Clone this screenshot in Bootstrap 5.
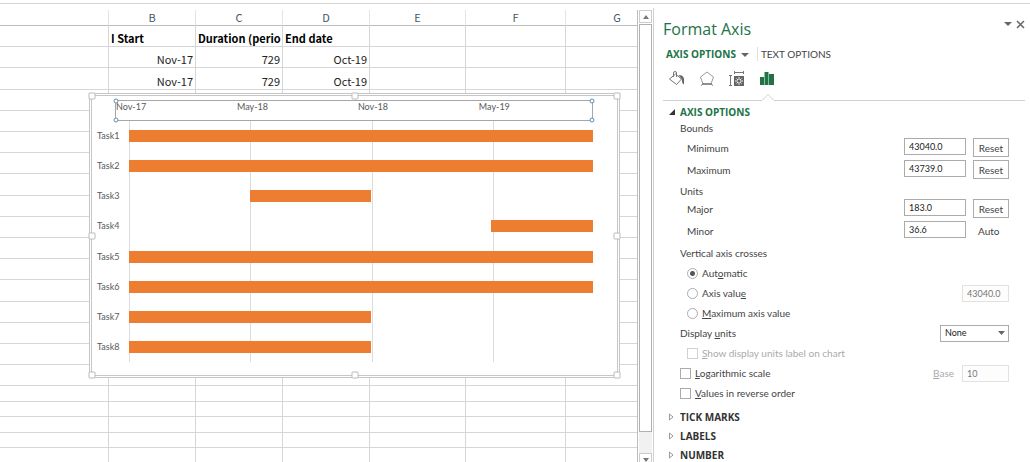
<!DOCTYPE html>
<html lang="en">
<head>
<meta charset="utf-8">
<meta name="viewport" content="width=device-width, initial-scale=1">
<title>Format Axis</title>
<link href="https://cdn.jsdelivr.net/npm/bootstrap@5.3.0/dist/css/bootstrap.min.css" rel="stylesheet">
<style>
  :root { --green: #217346; --ink: #444; --line: #d6d6d6; }
  body { font-family: "Open Sans", "Noto Sans", sans-serif; font-size: 10px; line-height: 14px; color: var(--ink); background: #fff; }
  .topline { height: 4px; border-bottom: 1px solid #d4d4d4; }

  /* worksheet */
  .sheet { min-width: 0; padding-top: 6px; }
  .grid { table-layout: fixed; width: 900px; border-collapse: separate; border-spacing: 0; font-family: "Noto Sans CJK SC", sans-serif; font-size: 11px; line-height: 14px; color: #222; }
  .grid th, .grid td { padding: 0 2px 1px; border-right: 1px solid var(--line); border-bottom: 1px solid var(--line); white-space: nowrap; overflow: hidden; vertical-align: bottom; }
  .grid thead th { height: 16px; font-weight: 400; color: #44546a; text-align: center; border-right-color: #e4e4e4; border-bottom-color: #bdbdbd; }
  .grid tbody tr { height: 21px; }
  .grid tbody tr:nth-child(5n+3) { height: 22px; }
  .grid tbody tr.short { height: 15px; line-height: 12px; }
  .grid tbody tr.short:nth-child(even) { height: 16px; }
  .grid tbody td { text-align: right; }
  .grid tbody th { color: #000; text-align: left; font-weight: 700; }
  .cells { border-right: 1px solid #bdbdbd; }

  .vbar { width: 15px; padding: 2px 1px 0; margin-bottom: -4px; }
  .vbar button { height: 13px; border: 1px solid #ccc; background: #fff; }
  .vbar .track { background: #f1f1f1; margin-top: 1px; }
  .vbar .thumb { height: 95%; border: 1px solid #b0b0b0; background: #fff; }

  /* floating chart */
  .chart { left: 91px; top: 91px; width: 527px; height: 281px; background: #fff; border: 1px solid #c6c6c6; outline: 1px solid #c6c6c6; outline-offset: 1px; box-shadow: 0 0 0 1px #fff; padding: 4px 24px 13px 5px; font-family: Lato, sans-serif; font-size: 9px; line-height: 12px; color: #595959; }
  .axis { height: 21px; margin-left: 18px; border: 1px solid #a6a6a6; }
  .axis span { flex: 0 0 auto; }
  .plot { margin-left: 32px; }
  .tick { width: 1px; top: 0; bottom: 0; background: #dcdcdc; }
  .task { margin-left: -32px; }
  .task .name { width: 32px; }
  .bar { height: 12px; background: #ed7d31; }
  .knob { width: 7px; height: 7px; background: #fff; border: 1px solid #bbb; border-radius: 1px; }
  .pin { width: 5px; height: 5px; background: #fff; border: 1px solid #5b8fb5; border-radius: 50%; }

  /* task pane */
  .pane { flex: 0 0 377px; border-left: 1px solid #d0d0d0; padding: 8px 5px 0 9px; }
  .pane h1 { font-size: 16px; line-height: 26px; font-weight: 400; color: var(--green); }
  .pane button, .pane input, .pane select { font-family: inherit; }
  .plain { border: 0; background: none; padding: 0; color: inherit; }
  .tabs { height: 24px; padding-left: 3px; }
  .tabs .on, .section.on .plain { color: var(--green); font-weight: 700; }
  .pane .second { border-left: 1px solid #e0e0e0; padding-left: 3px; margin-left: 8px; font-family: Lato, sans-serif; }
  .icons { height: 26px; gap: 12px; padding-left: 5px; }
  .icons button { width: 18px; height: 18px; }
  .icons svg { display: block; }
  .rule { height: 10px; }
  .rule i { height: 1px; background: #d0d0d0; margin-top: 8px; }
  .section { height: 19px; padding-left: 5px; }
  .section .plain { font-size: 10px; line-height: 14px; font-weight: 700; color: #333; }
  .section svg { width: 8px; height: 8px; margin-right: 4px; }
  .body { padding: 0 16px 0 17px; font-family: Lato, sans-serif; }
  .line { height: 20px; }
  .tight { height: 17px; }
  .sub { padding-left: 7px; }
  .value { height: 22px; }
  .value label { line-height: 20px; }
  .field { width: 62px; height: 17px; padding: 0 4px; border: 1px solid #ababab; border-radius: 0; font-size: 9px; line-height: 12px; color: #222; background: #fff; }
  .field.dim { width: 47px; border-color: #e1e1e1; color: #777; background: #fdfdfd; }
  .reset { width: 36px; height: 19px; margin-left: 7px; }
  .reset.btn { padding: 0; border: 1px solid #ababab; border-radius: 0; font-size: 10px; line-height: 14px; color: var(--ink); background: #fff; }
  output.reset { padding-left: 5px; line-height: 20px; }
  .pane .form-check-input { width: 11px; height: 11px; margin: 0 4px 0 0; border: 1px solid #ababab; background: #fff; flex: none; }
  .pane .form-check-input[type=checkbox] { border-radius: 0; }
  .pane .form-check-input[type=radio]:checked { background: radial-gradient(circle, #555 0 2px, #fff 3px); }
  .pane .form-check-input:disabled { border-color: #d0d0d0; opacity: 1; }
  .off { color: #aaa; }
  .units { width: 69px; height: 17px; padding: 0 4px; border: 1px solid #ababab; border-radius: 0; font-size: 9px; line-height: 14px; color: #222; appearance: none; background: #fff; }
  .drop svg { right: 4px; top: 6px; pointer-events: none; }
</style>
</head>
<body>
<div class="vh-100 d-flex flex-column overflow-hidden">
  <div class="topline flex-shrink-0"></div>
  <div class="d-flex flex-grow-1 overflow-hidden">

    <main class="sheet flex-grow-1 position-relative overflow-hidden">
      <div class="cells h-100 overflow-hidden">
        <table class="grid">
          <colgroup><col style="width:109px"><col style="width:87px"><col style="width:87px"><col style="width:87px"><col style="width:96px"><col style="width:100px"><col style="width:103px"><col></colgroup>
          <thead><tr><th></th><th>B</th><th>C</th><th>D</th><th>E</th><th>F</th><th>G</th><th></th></tr></thead>
          <tbody id="rows">
            <tr><td></td><th>I Start</th><th>Duration (perio</th><th>End date</th><td></td><td></td><td></td><td></td></tr>
            <tr><td></td><td>Nov-17</td><td>729</td><td>Oct-19</td><td></td><td></td><td></td><td></td></tr>
            <tr><td></td><td>Nov-17</td><td>729</td><td>Oct-19</td><td></td><td></td><td></td><td></td></tr>
          </tbody>
        </table>
      </div>

      <section class="chart position-absolute d-flex flex-column" aria-label="Gantt chart">
        <div class="axis d-flex position-relative flex-shrink-0" id="axis">
          <b class="pin position-absolute top-0 start-0 translate-middle"></b>
          <b class="pin position-absolute top-100 start-0 translate-middle"></b>
          <b class="pin position-absolute top-0 start-100 translate-middle"></b>
          <b class="pin position-absolute top-100 start-100 translate-middle"></b>
        </div>
        <div class="plot position-relative flex-grow-1 d-flex flex-column" id="plot"></div>
        <b class="knob position-absolute top-0 start-0 translate-middle"></b>
        <b class="knob position-absolute top-0 start-50 translate-middle"></b>
        <b class="knob position-absolute top-0 start-100 translate-middle"></b>
        <b class="knob position-absolute top-50 start-0 translate-middle"></b>
        <b class="knob position-absolute top-50 start-100 translate-middle"></b>
        <b class="knob position-absolute top-100 start-0 translate-middle"></b>
        <b class="knob position-absolute top-100 start-50 translate-middle"></b>
        <b class="knob position-absolute top-100 start-100 translate-middle"></b>
      </section>
    </main>

    <div class="vbar d-flex flex-column flex-shrink-0 mt-1">
      <button class="p-0 d-flex align-items-center justify-content-center flex-shrink-0" aria-label="Scroll up"><svg width="6" height="4"><path d="M0 4 3 0l3 4z" fill="#777"/></svg></button>
      <div class="track flex-grow-1"><div class="thumb"></div></div>
      <button class="p-0 d-flex align-items-center justify-content-center flex-shrink-0" aria-label="Scroll down"><svg width="6" height="4"><path d="M0 0h6L3 4z" fill="#777"/></svg></button>
    </div>

    <aside class="pane mt-1">
      <header class="d-flex align-items-start">
        <h1 class="m-0 me-auto">Format Axis</h1>
        <button class="plain me-1 mt-1 d-flex" aria-label="Pane options"><svg width="8" height="9"><path d="M0 2h8L4 6z" fill="#666"/></svg></button>
        <button class="plain mt-1 d-flex" aria-label="Close"><svg width="9" height="9"><path d="m1 1 7 7m0-7L1 8" stroke="#666" stroke-width="1.5"/></svg></button>
      </header>
      <nav class="tabs d-flex align-items-center">
        <button class="plain on">AXIS OPTIONS<svg class="ms-1" width="9" height="6"><path d="M1 1h8L5 5z" fill="#666"/></svg></button>
        <button class="plain second">TEXT OPTIONS</button>
      </nav>
      <div class="icons d-flex align-items-center">
        <button class="plain" aria-label="Fill and line"><svg width="18" height="18" fill="none" stroke="#777"><path d="m7.500 4 6 5-5 5.500L1.500 9l6-5zM5.500 7V3q0-1.500 1.500-1.500T8.500 3v4"/><path d="M10.500 5q5 0 5.500 4v5.500q-2.500-1.500-2-5L10.500 5z" fill="#666" stroke="none"/></svg></button>
        <button class="plain" aria-label="Effects"><svg width="18" height="18" fill="none" stroke="#777"><path d="m9 2 6.500 5-2.500 7H5L2.500 7 9 2z" stroke="#999"/><path d="M5 14h8M5 13.500l-1.500 2M13 13.500l1.500 2" stroke="#555"/></svg></button>
        <button class="plain" aria-label="Size and properties"><svg width="18" height="18"><path d="M6 2.500h10M6.500 1v3M15.500 1v3M2.500 6v10M1 5.500h3M1 15.500h3" stroke="#777"/><path d="M6 6h10v10H6z" fill="#666"/><path d="M11 7v8M7 11h8M8.500 8.500l5 5M13.500 8.500l-5 5" stroke="#eee"/><path d="M10 10h2v2h-2z" fill="#666"/></svg></button>
        <button class="plain" aria-label="Axis options"><svg width="18" height="18" fill="#217346"><path d="M2 7h4v8H2zM6.500 2h4v13h-4zM11 4h5v11h-5z"/></svg></button>
      </div>
      <div class="rule d-flex">
        <i style="width:99px"></i><svg width="12" height="10" fill="none" stroke="#d0d0d0"><path d="M0 8.500 6 2.500l6 6"/></svg><i class="flex-grow-1"></i>
      </div>

      <div class="section on d-flex align-items-center"><button class="plain d-flex align-items-center" aria-expanded="true"><svg><path d="M7 1v6H1z" fill="#333"/></svg>AXIS OPTIONS</button></div>
      <form class="body" onsubmit="return false">
        <div class="tight">Bounds</div>
        <div class="value sub d-flex align-items-start"><label class="me-auto" for="min">Minimum</label><input class="field" id="min" value="43040.0"><button class="reset btn" type="button">Reset</button></div>
        <div class="value sub d-flex align-items-start"><label class="me-auto" for="max">Maximum</label><input class="field" id="max" value="43739.0"><button class="reset btn" type="button">Reset</button></div>
        <div class="tight d-flex align-items-center">Units</div>
        <div class="value sub d-flex align-items-start"><label class="me-auto" for="major">Major</label><input class="field" id="major" value="183.0"><button class="reset btn" type="button">Reset</button></div>
        <div class="value sub d-flex align-items-start"><label class="me-auto" for="minor">Minor</label><input class="field" id="minor" value="36.6"><output class="reset">Auto</output></div>
        <div class="line d-flex align-items-center">Vertical axis crosses</div>
        <div class="line sub d-flex align-items-center"><input class="form-check-input" type="radio" name="cross" id="c1" checked><label for="c1">Aut<u>o</u>matic</label></div>
        <div class="line sub d-flex align-items-center"><input class="form-check-input" type="radio" name="cross" id="c2"><label class="me-auto" for="c2">Axis valu<u>e</u></label><input class="field dim" aria-label="Axis value" value="43040.0" disabled></div>
        <div class="line sub d-flex align-items-center"><input class="form-check-input" type="radio" name="cross" id="c3"><label for="c3"><u>M</u>aximum axis value</label></div>
        <div class="line d-flex align-items-center"><label class="me-auto" for="units">Display <u>u</u>nits</label>
          <span class="drop position-relative d-flex"><select class="units" id="units"><option>None</option><option>Hundreds</option><option>Thousands</option></select><svg class="position-absolute" width="7" height="5"><path d="M0 0h7L3.500 4z" fill="#666"/></svg></span></div>
        <div class="line sub d-flex align-items-center off"><input class="form-check-input" type="checkbox" id="show" disabled><label for="show"><u>S</u>how display units label on chart</label></div>
        <div class="line d-flex align-items-center"><input class="form-check-input" type="checkbox" id="log"><label class="me-auto" for="log"><u>L</u>ogarithmic scale</label><label class="off me-2" for="base"><u>B</u>ase</label><input class="field dim" id="base" value="10" disabled></div>
        <div class="line d-flex align-items-center"><input class="form-check-input" type="checkbox" id="rev"><label for="rev"><u>V</u>alues in reverse order</label></div>
      </form>
      <div class="section d-flex align-items-center mt-1"><button class="plain d-flex align-items-center"><svg><path d="M1.500 1v6L5 4z" fill="none" stroke="#999"/></svg>TICK MARKS</button></div>
      <div class="section d-flex align-items-center"><button class="plain d-flex align-items-center"><svg><path d="M1.500 1v6L5 4z" fill="none" stroke="#999"/></svg>LABELS</button></div>
      <div class="section d-flex align-items-center"><button class="plain d-flex align-items-center"><svg><path d="M1.500 1v6L5 4z" fill="none" stroke="#999"/></svg>NUMBER</button></div>
    </aside>
  </div>
</div>
<script src="https://cdn.jsdelivr.net/npm/bootstrap@5.3.0/dist/js/bootstrap.bundle.min.js"></script>
<script>
  // empty worksheet rows: 14 of full height, then the shorter ones
  const blank = '<td></td>'.repeat(8);
  document.getElementById('rows').insertAdjacentHTML('beforeend',
    `<tr>${blank}</tr>`.repeat(14) + `<tr class="short">${blank}</tr>`.repeat(20));

  // the time axis: serial dates, one tick for each major unit
  const min = 43040, max = 43739, major = 183;
  const pct = days => (days / (max - min) * 100).toFixed(2) + '%';
  const axis = document.getElementById('axis'), plot = document.getElementById('plot');
  ['Nov-17', 'May-18', 'Nov-18', 'May-19'].forEach((name, i) => {
    axis.insertAdjacentHTML('beforeend', `<span style="width:calc((100% - 14px) * ${(major / (max - min)).toFixed(4)})">${name}</span>`);
    plot.insertAdjacentHTML('beforeend', `<i class="tick position-absolute" style="left:${pct(i * major)}"></i>`);
  });
  [[0, 699], [0, 699], [183, 182], [546, 153], [0, 699], [0, 699], [0, 365], [0, 365]].forEach(([start, days], i) => {
    plot.insertAdjacentHTML('beforeend',
      `<div class="task d-flex align-items-center flex-fill position-relative"><span class="name">Task${i + 1}</span><div class="flex-grow-1"><div class="bar" style="margin-left:${pct(start)};width:${pct(days)}"></div></div></div>`);
  });
</script>
</body>
</html>
